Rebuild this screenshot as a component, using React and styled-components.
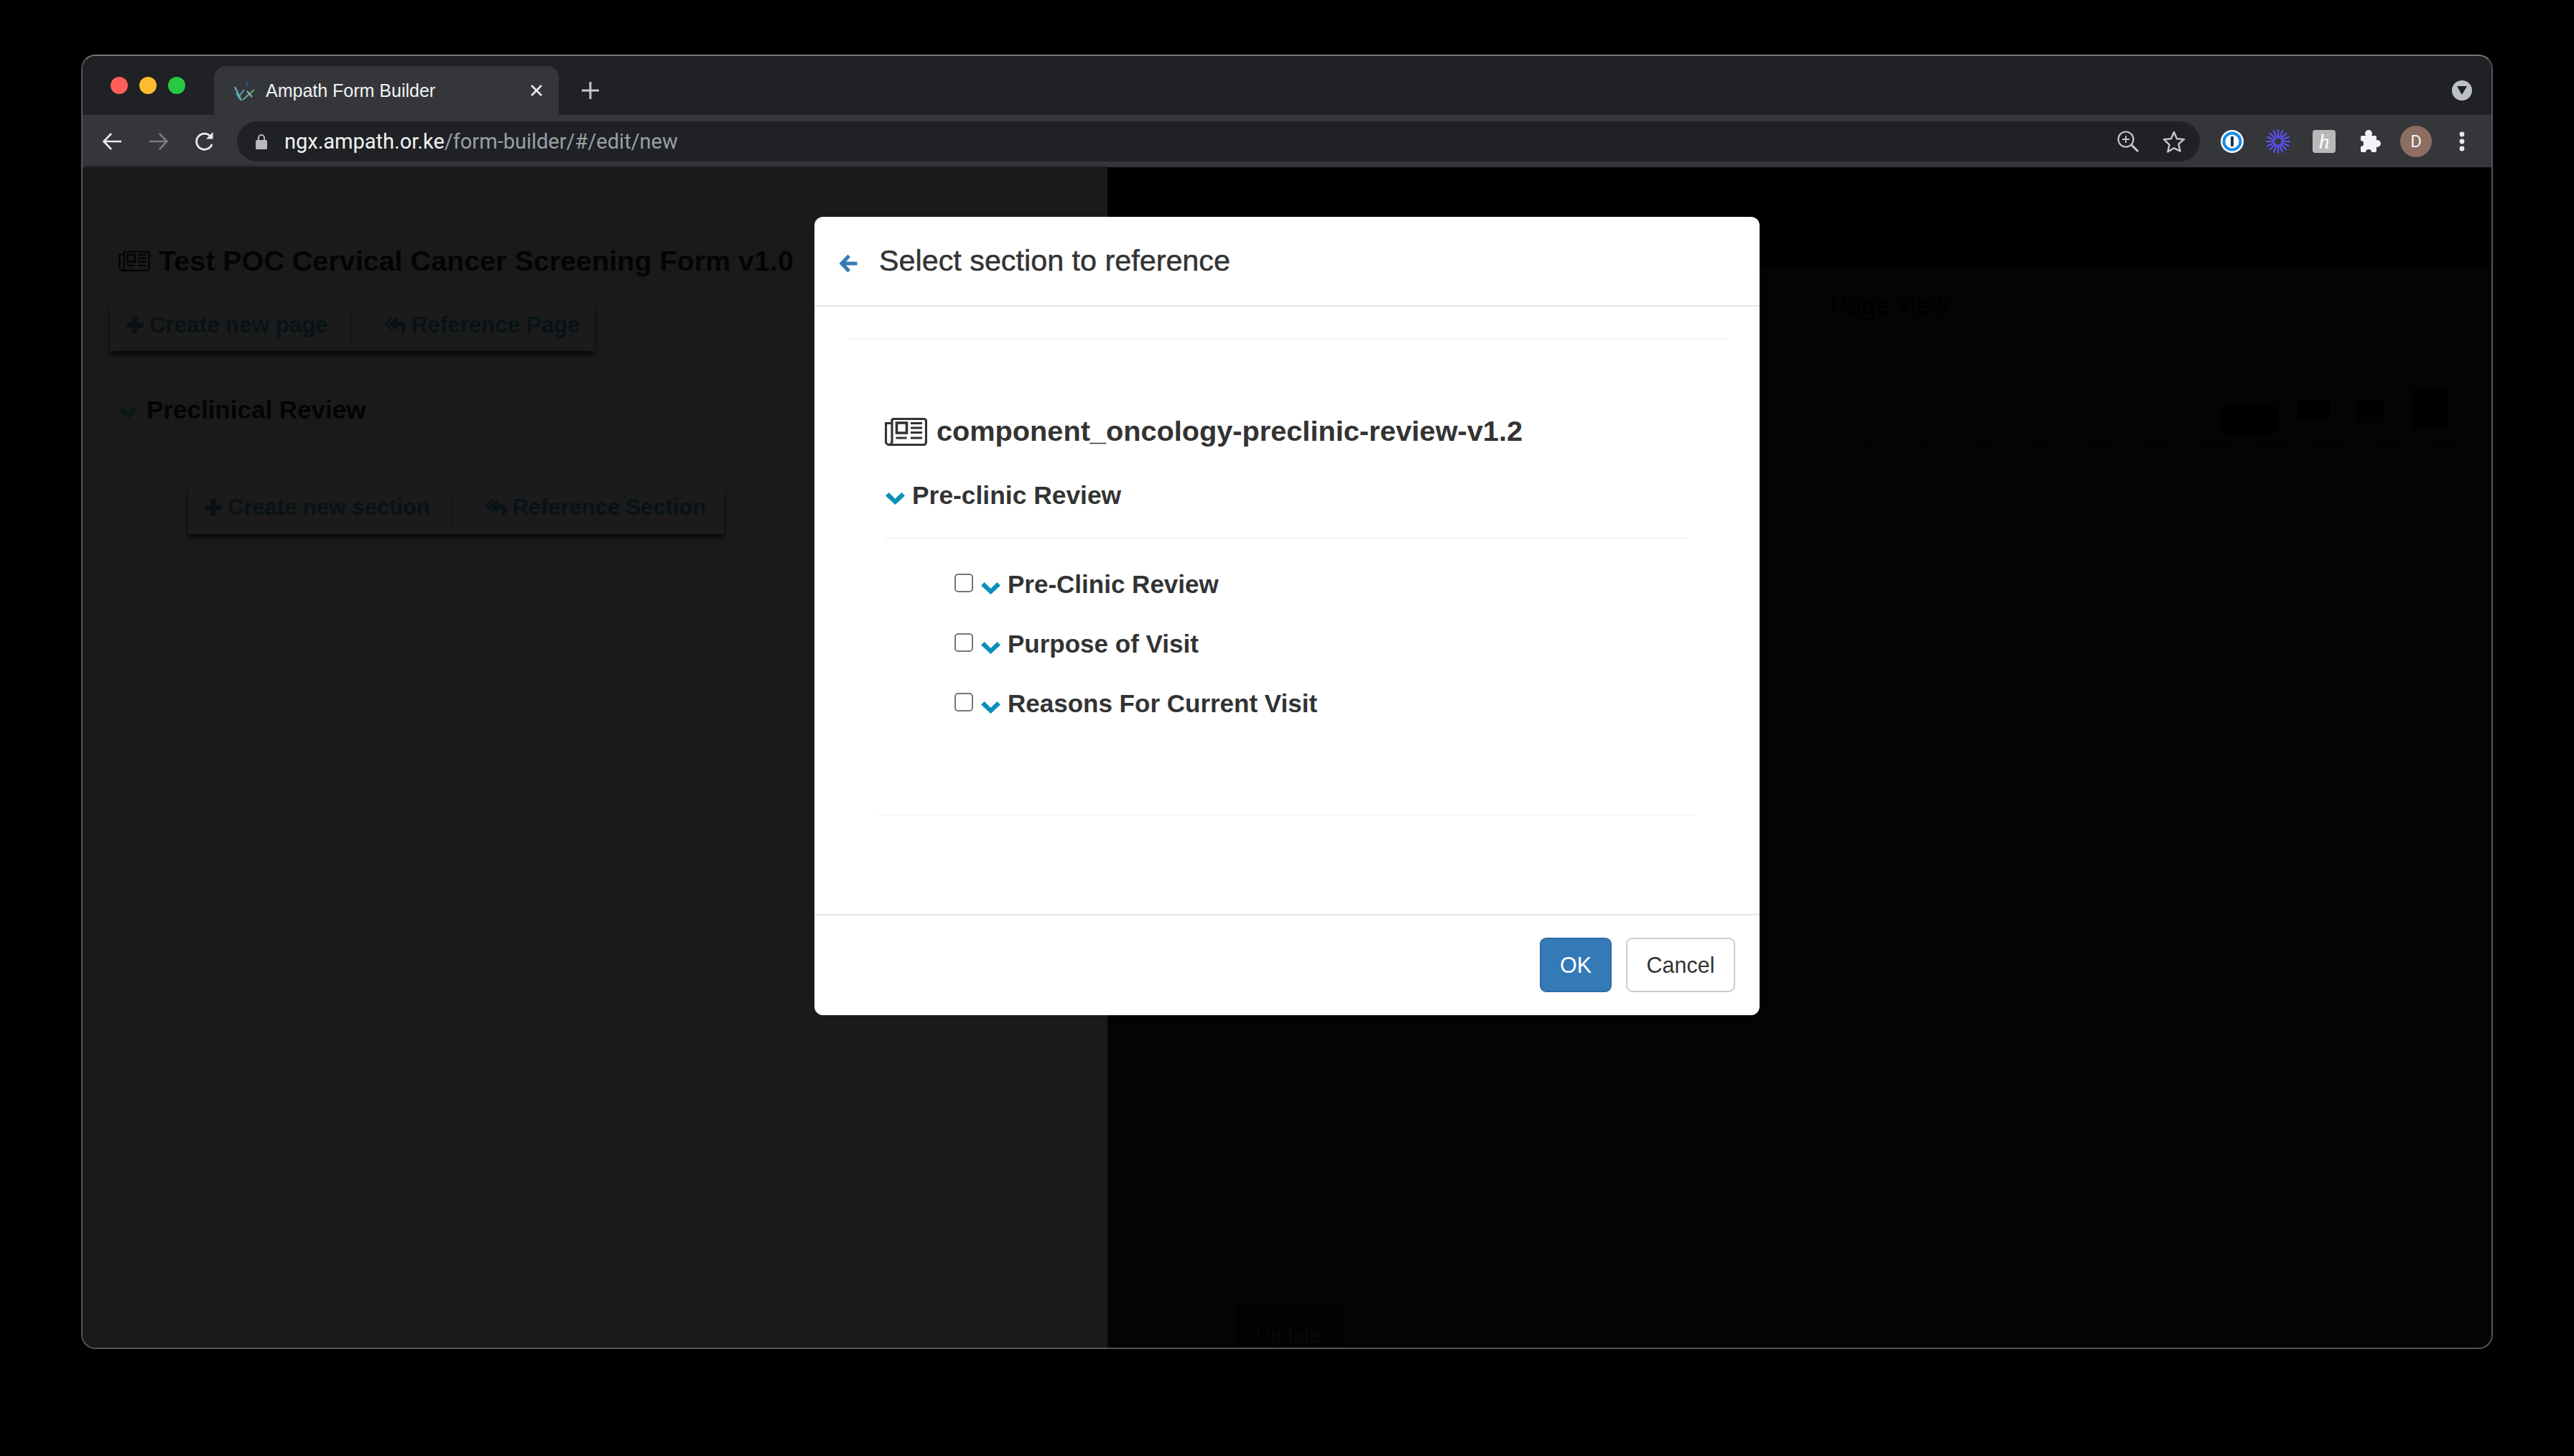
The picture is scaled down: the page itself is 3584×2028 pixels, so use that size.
import React from "react";
import styled, { createGlobalStyle } from "styled-components";
import { FaReplyAll } from "react-icons/fa";

const Global = createGlobalStyle`
  html, body { margin: 0; padding: 0; background: #000; }
  body { width: 3584px; height: 2028px; overflow: hidden; font-family: "Liberation Sans", Arial, sans-serif; }
  * { box-sizing: border-box; }
`;

const Desktop = styled.div`
  width: 3584px;
  height: 2028px;
  padding: 76px 113px 149px 113px;
  background: #000;
`;
const Win = styled.div`
  position: relative;
  width: 100%;
  height: 100%;
  display: flex;
  flex-direction: column;
  border: 2px solid #565658;
  border-top-color: #77787a;
  border-radius: 20px;
  overflow: hidden;
  background: #202124;
`;
const TabStrip = styled.div`
  height: 82px;
  flex: none;
  display: flex;
  align-items: flex-end;
  padding-left: 39px;
  background: #202124;
`;
const Lights = styled.div`
  display: flex;
  gap: 16px;
  align-self: flex-start;
  margin-top: 29px;
`;
const Light = styled.span`
  width: 24px;
  height: 24px;
  border-radius: 50%;
  background: ${(p) => p.$c};
`;
const Tab = styled.div`
  width: 480px;
  height: 68px;
  margin-left: 40px;
  padding: 0 22px 0 26px;
  display: flex;
  align-items: center;
  background: #35363a;
  border-radius: 16px 16px 0 0;
  color: #f1f3f4;
`;
const TabTitle = styled.span`
  flex: 1;
  margin-left: 12px;
  font-size: 25px;
  white-space: nowrap;
`;
const TabClose = styled.svg`
  width: 18px;
  height: 18px;
`;
const NewTab = styled.svg`
  width: 26px;
  height: 26px;
  margin: 0 0 21px 31px;
`;
const TabMenu = styled.span`
  width: 28px;
  height: 28px;
  margin: 0 27px 20px auto;
  border-radius: 50%;
  background: #bdc1c6;
  display: flex;
  align-items: center;
  justify-content: center;
`;
const Toolbar = styled.div`
  height: 73px;
  flex: none;
  display: flex;
  align-items: center;
  padding: 0 0 0 26px;
  background: #35363a;
`;
const NavIcon = styled.svg`
  width: 30px;
  height: 30px;
  margin-right: ${(p) => p.$mr}px;
  flex: none;
`;
const Omnibox = styled.div`
  width: 2733px;
  height: 56px;
  margin-left: 30px;
  padding: 0 20px 0 24px;
  display: flex;
  align-items: center;
  border-radius: 28px;
  background: #202124;
`;
const UrlHost = styled.span`
  margin-left: 22px;
  font-family: "Roboto", "Liberation Sans", sans-serif;
  font-size: 29px;
  color: #f1f3f4;
`;
const UrlPath = styled.span`
  font-family: "Roboto", "Liberation Sans", sans-serif;
  font-size: 29px;
  color: #9aa0a6;
  flex: 1;
`;
const OmniIcon = styled.svg`
  width: 32px;
  height: 32px;
  margin-left: ${(p) => p.$ml || 0}px;
`;
const ExtRow = styled.div`
  display: flex;
  align-items: center;
  margin-left: 13px;
`;
const ExtSlot = styled.div`
  width: 64px;
  display: flex;
  justify-content: center;
  align-items: center;
`;
const HBox = styled.span`
  width: 32px;
  height: 32px;
  border-radius: 4px;
  background: #b9b9b9;
  color: #fff;
  display: flex;
  align-items: center;
  justify-content: center;
  font: italic 30px "Liberation Serif", serif;
`;
const Avatar = styled.span`
  width: 44px;
  height: 44px;
  border-radius: 50%;
  background: #8d6e63;
  color: #f5f0ee;
  display: flex;
  align-items: center;
  justify-content: center;
  font: 24px "Roboto", sans-serif;
`;
const Workspace = styled.div`
  flex: 1;
  display: flex;
  min-height: 0;
`;
const LeftPane = styled.div`
  width: 1427px;
  flex: none;
  padding-top: 106px;
  background: #1a1a1a;
  color: #040404;
  box-shadow: 2px 0 4px #0c0c0c;
`;
const FormTitle = styled.div`
  height: 48px;
  margin-left: 50px;
  display: flex;
  align-items: center;
  gap: 12px;
  font-weight: 700;
  font-size: 39.5px;
  white-space: nowrap;
`;
const PageIcon = styled.svg`
  width: ${(p) => p.$w}px;
  height: ${(p) => p.$h}px;
  flex: none;
`;
const ActionCard = styled.div`
  width: ${(p) => p.$w}px;
  height: ${(p) => p.$h}px;
  margin: ${(p) => p.$mt}px 0 0 ${(p) => p.$ml}px;
  padding: 6px 0 0 23px;
  display: flex;
  align-items: center;
  align-self: flex-start;
  background: #1b1b1b;
  box-shadow: 0 5px 6px #080808;
  color: #081216;
  font-weight: 700;
  font-size: ${(p) => p.$fs}px;
  white-space: nowrap;
`;
const ActionGroup = styled.span`
  display: flex;
  align-items: center;
  gap: ${(p) => p.$gap}px;
  margin-top: -16px;
`;
const Separator = styled.span`
  width: 2px;
  height: 46px;
  margin: -8px ${(p) => p.$r}px 0 ${(p) => p.$l}px;
  background: #151515;
`;
const PageRow = styled.div`
  height: 44px;
  margin: 60px 0 0 51px;
  display: flex;
  align-items: center;
  gap: 12px;
  font-weight: 700;
  font-size: 35px;
`;
const ChevronIcon = styled.svg`
  width: ${(p) => p.$w}px;
  height: ${(p) => (p.$w * 18) / 27}px;
  margin-top: ${(p) => p.$mt || 0}px;
  flex: none;
  fill: ${(p) => p.$c};
`;
const PlusIcon = styled.svg`
  width: 24px;
  height: 24px;
  flex: none;
  fill: currentColor;
`;
const ArrowIcon = styled.svg`
  width: 26px;
  height: 26px;
  flex: none;
  margin-top: 6px;
  fill: #337ab7;
`;
const RightPane = styled.div`
  flex: 1;
  display: flex;
  flex-direction: column;
  background: #040404;
`;
const RightHead = styled.div`
  height: 142px;
  flex: none;
  display: flex;
  justify-content: flex-end;
  gap: 54px;
  padding: 37px 35px 0 0;
  background: #000;
`;
const GhostBtn = styled.div`
  width: ${(p) => p.$w}px;
  height: ${(p) => p.$h}px;
  background: ${(p) => p.$c};
`;
const PaneLabel = styled.div`
  margin: 32px 0 0 1006px;
  font-size: 36px;
  line-height: 37px;
  color: #000;
  white-space: nowrap;
`;
const PanelRow = styled.div`
  height: 62px;
  margin: 111px 43px 0 958px;
  padding-right: 19px;
  display: flex;
  justify-content: flex-end;
  align-items: flex-end;
  border-bottom: 3px dotted #010101;
`;
const Chip = styled.span`
  width: ${(p) => p.$w}px;
  height: ${(p) => p.$h}px;
  margin-bottom: ${(p) => p.$mb}px;
  margin-left: ${(p) => p.$ml}px;
  border-radius: ${(p) => p.$r || 2}px;
  background: ${(p) => p.$c};
`;
const SaveBtn = styled.div`
  width: 148px;
  height: 62px;
  margin: auto 0 0 178px;
  padding-top: 30px;
  text-align: center;
  background: #020203;
  color: #080809;
  font-size: 28px;
  line-height: 30px;
  overflow: hidden;
`;
const Modal = styled.div`
  position: absolute;
  left: 1019px;
  top: 224px;
  width: 1316px;
  height: 1112px;
  display: flex;
  flex-direction: column;
  background: #fff;
  border-radius: 12px;
  color: #333;
`;
const ModalHeader = styled.div`
  height: 125px;
  flex: none;
  padding: 0 0 0 34px;
  display: flex;
  align-items: center;
  gap: 30px;
  border-bottom: 2px solid #e5e5e5;
`;
const ModalTitle = styled.h4`
  margin: 0;
  font-weight: 400;
  font-size: 41.3px;
  color: #333;
  -webkit-text-stroke: 0.5px #333;
`;
const ModalBody = styled.div`
  flex: 1;
  padding: 44px 45px 0 47px;
  min-height: 0;
`;
const FaintRule = styled.div`
  height: 2px;
  background: #f4f4f4;
  margin: ${(p) => p.$m};
`;
const CompRow = styled.div`
  height: 48px;
  margin: 103px 0 0 51px;
  display: flex;
  align-items: center;
  gap: 13px;
  font-weight: 700;
  font-size: 39.7px;
  color: #333;
  white-space: nowrap;
`;
const SectionRow = styled.div`
  height: 44px;
  margin: 44px 0 0 52px;
  display: flex;
  align-items: center;
  gap: 10px;
  font-weight: 700;
  font-size: 35.4px;
  white-space: nowrap;
`;
const ItemList = styled.div`
  margin: 43px 0 0 148px;
  display: flex;
  flex-direction: column;
  gap: 41px;
`;
const ItemRow = styled.label`
  height: 42px;
  display: flex;
  align-items: center;
  gap: 10px;
  font-weight: 700;
  font-size: 35px;
  white-space: nowrap;
`;
const Box = styled.input`
  appearance: none;
  width: 26px;
  height: 26px;
  margin: -4px 1px 0 0;
  border: 2px solid #767676;
  border-radius: 5px;
  background: #fff;
  flex: none;
`;
const ModalFooter = styled.div`
  height: 141px;
  flex: none;
  padding: 31px 34px 0 0;
  display: flex;
  justify-content: flex-end;
  gap: 20px;
  border-top: 2px solid #e5e5e5;
`;
const Button = styled.button`
  height: 76px;
  width: ${(p) => p.$w}px;
  padding: 0;
  border: 2px solid ${(p) => (p.$primary ? "#2e6da4" : "#ccc")};
  border-radius: 9px;
  background: ${(p) => (p.$primary ? "#337ab7" : "#fff")};
  color: ${(p) => (p.$primary ? "#fff" : "#333")};
  font-family: "Liberation Sans", Arial, sans-serif;
  font-size: 30.5px;
`;

const Newspaper = ({ w, h }) => (
  <PageIcon $w={w} $h={h} viewBox="0 0 59 41" fill="none" stroke="currentColor">
    <path d="M10 3.5h44.5a3 3 0 0 1 3 3V36a3.5 3.5 0 0 1-3.5 3.5H6A4.5 4.5 0 0 1 1.5 35V9.5H10" strokeWidth="3.2" />
    <path d="M10 3.5V35a4.5 4.5 0 0 1-4 4.5" strokeWidth="3.2" />
    <rect x="16.5" y="9" width="14" height="14" strokeWidth="3.6" />
    <path d="M36 9.5h16M36 16h16M36 22.5h16M15.5 30h15M36 30h16" strokeWidth="3.2" />
  </PageIcon>
);

const Chevron = ({ w, color, mt }) => (
  <ChevronIcon $w={w} $c={color} $mt={mt} viewBox="0 0 27 18">
    <path d="M0 5.5L4.6 1l8.9 8.8L22.4 1 27 5.5 13.5 18z" />
  </ChevronIcon>
);

const Plus = () => (
  <PlusIcon viewBox="0 0 24 24">
    <path d="M8.5 0h7v8.5H24v7h-8.5V24h-7v-8.5H0v-7h8.5z" />
  </PlusIcon>
);

const Favicon = () => (
  <svg width="34" height="34" viewBox="0 0 34 34" fill="none" strokeWidth="2">
    <path d="M3 12l9 19" stroke="#6ab9c9" />
    <path d="M8 26l8-10" stroke="#54b0a8" />
    <path d="M14 30l16-14" stroke="#5fb46a" />
    <path d="M19 4l2 8" stroke="#2a4f9c" />
    <path d="M20 18l7 8" stroke="#88a8d8" />
    <path d="M5 21l5 8" stroke="#4aa9c4" />
  </svg>
);

const Burst = () => (
  <svg width="34" height="34" viewBox="-17 -17 34 34" stroke="#5b50f5" strokeWidth="2.2" strokeLinecap="round">
    {Array.from({ length: 16 }, (_, i) => {
      const a = (i * Math.PI) / 8;
      return <line key={i} x1={Math.cos(a) * 5.5} y1={Math.sin(a) * 5.5} x2={Math.cos(a) * 16} y2={Math.sin(a) * 16} />;
    })}
  </svg>
);

const Puzzle = () => (
  <svg width="32" height="34" viewBox="0 0 32 34">
    <rect x="3" y="9" width="22" height="23" rx="2" fill="#f1f3f4" />
    <circle cx="14" cy="6" r="5" fill="#f1f3f4" />
    <circle cx="26" cy="20" r="5" fill="#f1f3f4" />
    <circle cx="3" cy="20" r="4" fill="#35363a" />
    <circle cx="14" cy="32" r="4" fill="#35363a" />
  </svg>
);

const ITEMS = ["Pre-Clinic Review", "Purpose of Visit", "Reasons For Current Visit"];

export default function App() {
  return (
    <>
      <Global />
      <Desktop>
        <Win>
          <TabStrip>
            <Lights>
              <Light $c="#ff5f57" />
              <Light $c="#febc2e" />
              <Light $c="#28c840" />
            </Lights>
            <Tab>
              <Favicon />
              <TabTitle>Ampath Form Builder</TabTitle>
              <TabClose viewBox="0 0 18 18" stroke="#e8eaed" strokeWidth="2.6">
                <path d="M2 2l14 14M16 2L2 16" />
              </TabClose>
            </Tab>
            <NewTab viewBox="0 0 26 26" stroke="#c4c7cb" strokeWidth="3">
              <path d="M13 1v24M1 13h24" />
            </NewTab>
            <TabMenu>
              <svg width="16" height="14" viewBox="0 0 16 14" fill="#202124">
                <path d="M1 1h14L8 13z" />
              </svg>
            </TabMenu>
          </TabStrip>
          <Toolbar>
            <NavIcon $mr={35} viewBox="0 0 30 30" fill="none" stroke="#e8eaed" strokeWidth="2.6">
              <path d="M28 15H4M14 4L3.5 15 14 26" />
            </NavIcon>
            <NavIcon $mr={34} viewBox="0 0 30 30" fill="none" stroke="#7b7d80" strokeWidth="2.6">
              <path d="M2 15h24M16 4l10.5 11L16 26" />
            </NavIcon>
            <NavIcon $mr={0} viewBox="0 0 30 30" fill="none" stroke="#e8eaed" strokeWidth="2.8">
              <path d="M25 19a11 11 0 1 1-2-11" />
              <path d="M26.5 2v9.5H17z" fill="#e8eaed" stroke="none" />
            </NavIcon>
            <Omnibox>
              <svg width="20" height="24" viewBox="0 0 20 24" fill="#b6b8bb">
                <rect x="2" y="10" width="16" height="13" rx="1.5" />
                <path d="M5 10V7a5 5 0 0 1 10 0v3h-2V7a3 3 0 0 0-6 0v3z" />
              </svg>
              <UrlHost>ngx.ampath.or.ke</UrlHost>
              <UrlPath>/form-builder/#/edit/new</UrlPath>
              <OmniIcon viewBox="0 0 32 32" fill="none" stroke="#c4c7cb" strokeWidth="2.2">
                <circle cx="13" cy="13" r="10.5" />
                <path d="M21 21l9 9" strokeWidth="3" />
                <path d="M13 8v10M8 13h10" strokeWidth="1.8" />
              </OmniIcon>
              <OmniIcon $ml={32} viewBox="0 0 32 32" fill="none" stroke="#c4c7cb" strokeWidth="2.4">
                <path d="M16 3l4 9.2 10 .9-7.6 6.6 2.3 9.8L16 25.3l-8.7 5.2 2.3-9.8L2 13.1l10-.9z" strokeLinejoin="round" />
              </OmniIcon>
            </Omnibox>
            <ExtRow>
              <ExtSlot>
                <svg width="32" height="32" viewBox="0 0 32 32">
                  <circle cx="16" cy="16" r="16" fill="#fff" />
                  <circle cx="16" cy="16" r="11.5" fill="#fff" stroke="#1a8ce0" strokeWidth="4" />
                  <rect x="14" y="9" width="4" height="14" rx="1" fill="#16324f" />
                </svg>
              </ExtSlot>
              <ExtSlot>
                <Burst />
              </ExtSlot>
              <ExtSlot>
                <HBox>h</HBox>
              </ExtSlot>
              <ExtSlot>
                <Puzzle />
              </ExtSlot>
              <ExtSlot>
                <Avatar>D</Avatar>
              </ExtSlot>
              <ExtSlot>
                <svg width="8" height="28" viewBox="0 0 8 28" fill="#e8eaed">
                  <circle cx="4" cy="4" r="3.4" />
                  <circle cx="4" cy="14" r="3.4" />
                  <circle cx="4" cy="24" r="3.4" />
                </svg>
              </ExtSlot>
            </ExtRow>
          </Toolbar>
          <Workspace>
            <LeftPane>
              <FormTitle>
                <Newspaper w={44} h={30} />
                <span>Test POC Cervical Cancer Screening Form v1.0</span>
              </FormTitle>
              <ActionCard $w={675} $h={62} $mt={40} $ml={38} $fs={31.3}>
                <ActionGroup $gap={8}>
                  <Plus />
                  <span>Create new page</span>
                </ActionGroup>
                <Separator $l={32} $r={44} />
                <ActionGroup $gap={8}>
                  <FaReplyAll size={30} />
                  <span>Reference Page</span>
                </ActionGroup>
              </ActionCard>
              <PageRow>
                <Chevron w={26} color="#0a1519" mt={8} />
                <span>Preclinical Review</span>
              </PageRow>
              <ActionCard $w={746} $h={64} $mt={87} $ml={147} $fs={30.9}>
                <ActionGroup $gap={8}>
                  <Plus />
                  <span>Create new section</span>
                </ActionGroup>
                <Separator $l={30} $r={44} />
                <ActionGroup $gap={9}>
                  <FaReplyAll size={30} />
                  <span>Reference Section</span>
                </ActionGroup>
              </ActionCard>
            </LeftPane>
            <RightPane>
              <RightHead>
                <GhostBtn $w={293} $h={67} $c="#000200" />
                <GhostBtn $w={153} $h={72} $c="#010102" />
              </RightHead>
              <PaneLabel>Page view</PaneLabel>
              <PanelRow>
                <Chip $w={82} $h={39} $mb={10} $ml={0} $r={10} $c="#000" />
                <Chip $w={45} $h={27} $mb={30} $ml={26} $c="#000" />
                <Chip $w={39} $h={32} $mb={25} $ml={38} $c="#030000" />
                <Chip $w={48} $h={55} $mb={17} $ml={38} $c="#000" />
              </PanelRow>
              <SaveBtn>Update</SaveBtn>
            </RightPane>
          </Workspace>
          <Modal>
            <ModalHeader>
              <ArrowIcon viewBox="0 0 26 26">
                <path d="M12.5 0.5L0.5 13l12 12.5 3.5-3.5-6-6.5H25.5v-5H10l6-6.5z" />
              </ArrowIcon>
              <ModalTitle>Select section to reference</ModalTitle>
            </ModalHeader>
            <ModalBody>
              <FaintRule $m="0" />
              <CompRow>
                <Newspaper w={59} h={41} />
                <span>component_oncology-preclinic-review-v1.2</span>
              </CompRow>
              <SectionRow>
                <Chevron w={27} color="#0a8fba" mt={8} />
                <span>Pre-clinic Review</span>
              </SectionRow>
              <FaintRule $m="36px 56px 0 51px" />
              <ItemList>
                {ITEMS.map((t) => (
                  <ItemRow key={t}>
                    <Box type="checkbox" />
                    <Chevron w={27} color="#0a8fba" mt={9} />
                    <span>{t}</span>
                  </ItemRow>
                ))}
              </ItemList>
              <FaintRule $m="133px 43px 0 42px" />
            </ModalBody>
            <ModalFooter>
              <Button $primary $w={100}>OK</Button>
              <Button $w={152}>Cancel</Button>
            </ModalFooter>
          </Modal>
        </Win>
      </Desktop>
    </>
  );
}
